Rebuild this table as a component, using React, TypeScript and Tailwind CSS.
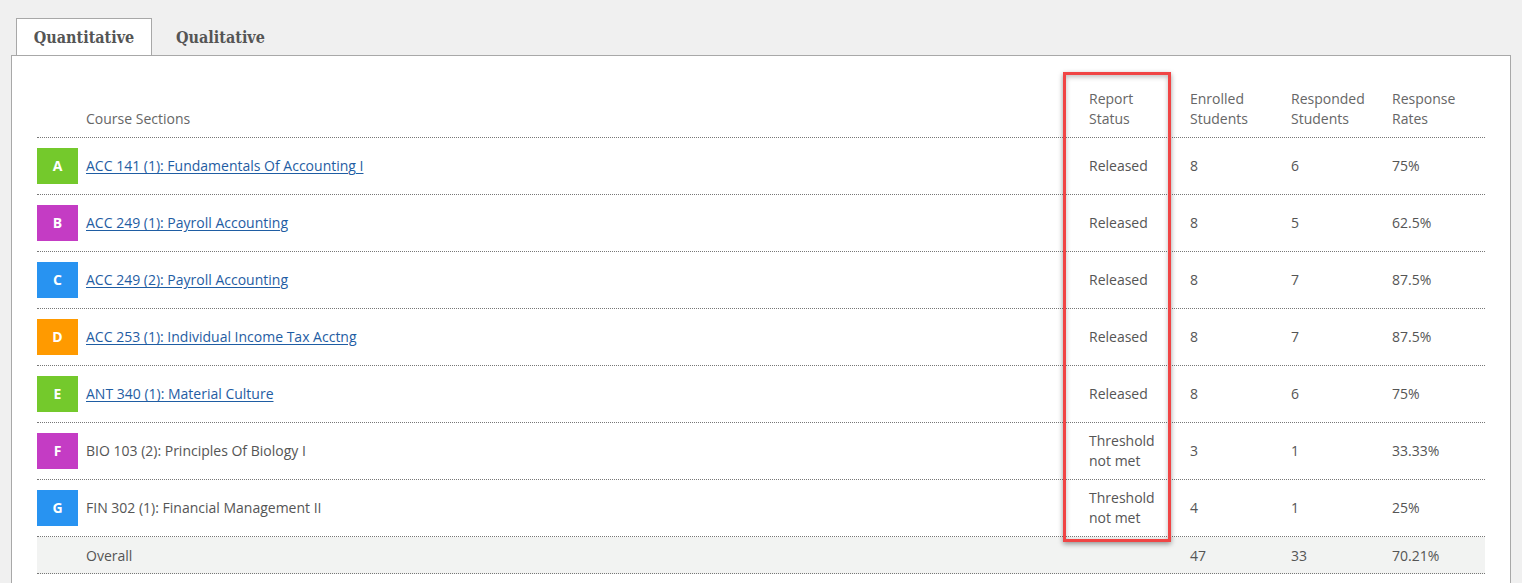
import React from 'react';

interface Section {
  letter: string;
  color: string;
  name: string;
  link: boolean;
  status: string;
  enrolled: string;
  responded: string;
  rate: string;
}

const sections: Section[] = [
  { letter: 'A', color: 'bg-[#74c92c]', name: 'ACC 141 (1): Fundamentals Of Accounting I', link: true, status: 'Released', enrolled: '8', responded: '6', rate: '75%' },
  { letter: 'B', color: 'bg-[#c43cc4]', name: 'ACC 249 (1): Payroll Accounting', link: true, status: 'Released', enrolled: '8', responded: '5', rate: '62.5%' },
  { letter: 'C', color: 'bg-[#2893f1]', name: 'ACC 249 (2): Payroll Accounting', link: true, status: 'Released', enrolled: '8', responded: '7', rate: '87.5%' },
  { letter: 'D', color: 'bg-[#ff9a00]', name: 'ACC 253 (1): Individual Income Tax Acctng', link: true, status: 'Released', enrolled: '8', responded: '7', rate: '87.5%' },
  { letter: 'E', color: 'bg-[#74c92c]', name: 'ANT 340 (1): Material Culture', link: true, status: 'Released', enrolled: '8', responded: '6', rate: '75%' },
  { letter: 'F', color: 'bg-[#c43cc4]', name: 'BIO 103 (2): Principles Of Biology I', link: false, status: 'Threshold not met', enrolled: '3', responded: '1', rate: '33.33%' },
  { letter: 'G', color: 'bg-[#2893f1]', name: 'FIN 302 (1): Financial Management II', link: false, status: 'Threshold not met', enrolled: '4', responded: '1', rate: '25%' },
];

const grid = 'grid grid-cols-[41px_1003px_101px_101px_101px_101px]';
const tabFont = "font-['DejaVu_Serif_Condensed','DejaVu_Serif',serif] font-stretch-condensed font-bold text-[16px] text-[#555]";

export default function App() {
  return (
    <div className="min-h-screen bg-[#f0f0f0] px-[11px] pt-[19px] text-[14px] text-[#555] font-['Open_Sans',sans-serif]">
      {/* Tabs */}
      <div className="flex items-end pl-[5px] h-[36px] relative z-10">
        <div className={`h-[37px] w-[136px] pt-px border border-b-0 border-[#a8a8a8] bg-white flex items-center justify-center ${tabFont}`}>
          Quantitative
        </div>
        <div className={`h-[36px] pl-[24px] pt-px flex items-center ${tabFont}`}>
          Qualitative
        </div>
      </div>

      {/* Panel */}
      <div className="border border-[#a8a8a8] bg-white px-[25px] pt-[33px] pb-10 min-h-[600px]">
        <div className="relative">
          {/* Header */}
          <div className={`${grid} items-end leading-[20px] text-[#666] border-b border-dotted border-[#777] pb-2`}>
            <div />
            <div className="pl-2">Course Sections</div>
            <div className="pl-2">Report<br />Status</div>
            <div className="pl-2">Enrolled<br />Students</div>
            <div className="pl-2">Responded<br />Students</div>
            <div className="pl-2">Response<br />Rates</div>
          </div>

          {/* Rows */}
          {sections.map((s) => (
            <div key={s.letter} className={`${grid} items-center h-[57px] leading-[20px] border-b border-dotted border-[#777]`}>
              <div className={`${s.color} h-[36px] w-[41px] flex items-center justify-center text-white font-bold`}>
                {s.letter}
              </div>
              <div className="pl-2">
                {s.link ? (
                  <a href="#" className="text-[#1f5da3] underline underline-offset-[2px]">{s.name}</a>
                ) : (
                  s.name
                )}
              </div>
              <div className="pl-2">
                {s.status === 'Released' ? 'Released' : (<>Threshold<br />not met</>)}
              </div>
              <div className="pl-2">{s.enrolled}</div>
              <div className="pl-2">{s.responded}</div>
              <div className="pl-2">{s.rate}</div>
            </div>
          ))}

          {/* Overall */}
          <div className={`${grid} items-center h-[37px] bg-[#f2f3f2] border-b border-dotted border-[#777]`}>
            <div />
            <div className="pl-2">Overall</div>
            <div />
            <div className="pl-2">47</div>
            <div className="pl-2">33</div>
            <div className="pl-2">70.21%</div>
          </div>

          {/* Highlight annotation */}
          <div className="absolute left-[1026px] top-[-17px] w-[108px] h-[470px] border-[3px] border-[#f04545] shadow-[0_2px_5px_rgba(0,0,0,0.4),inset_0_2px_5px_rgba(0,0,0,0.25)] pointer-events-none" />
        </div>
      </div>
    </div>
  );
}
